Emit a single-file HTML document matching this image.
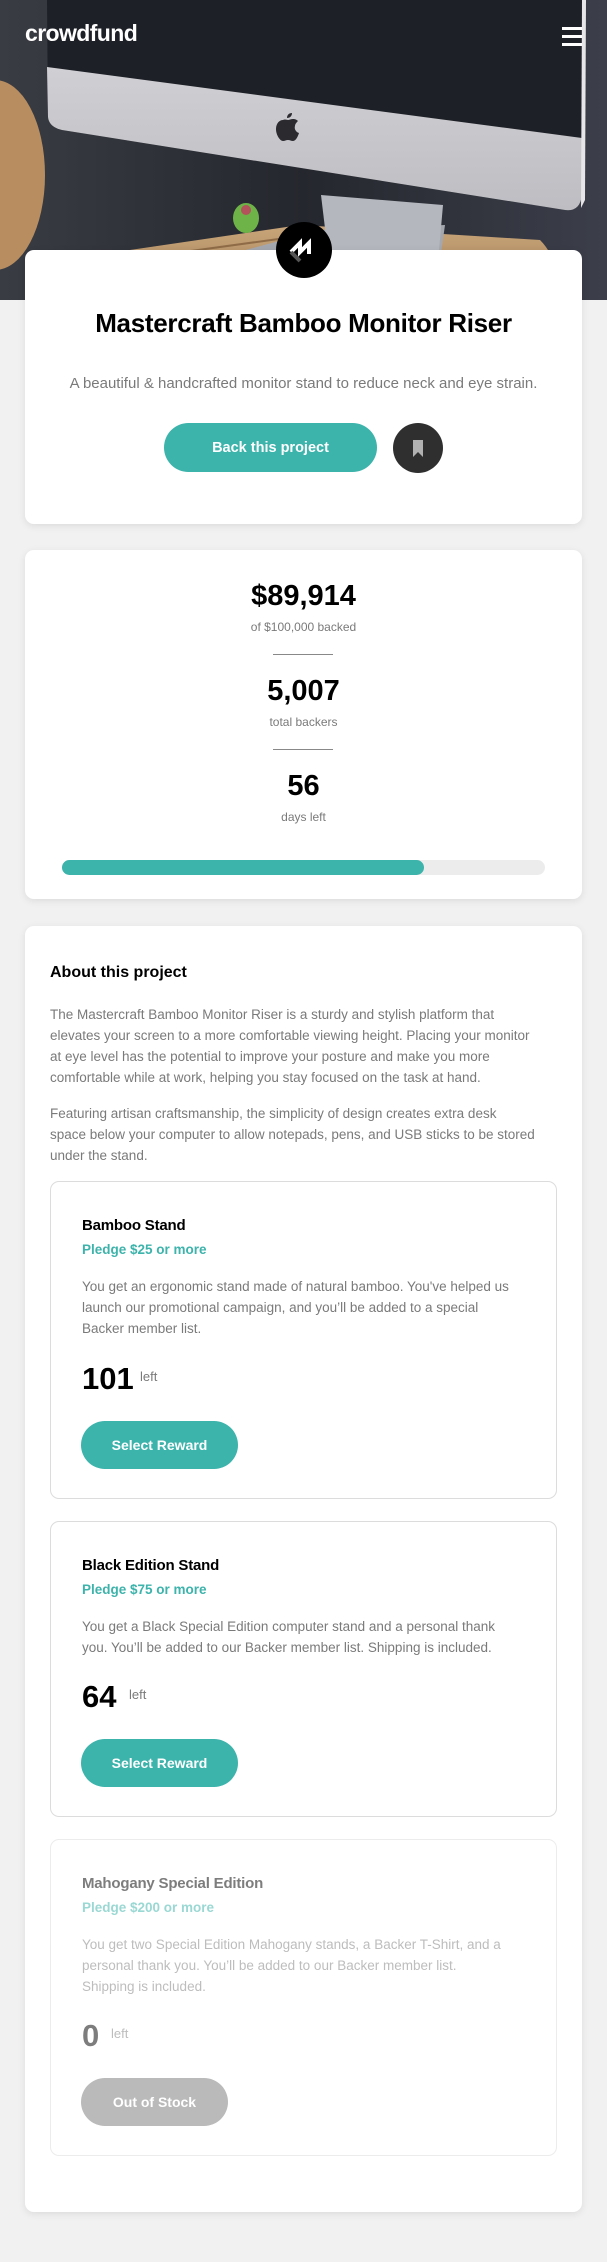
<!DOCTYPE html>
<html><head><meta charset="utf-8">
<style>
*{margin:0;padding:0;box-sizing:border-box}
body{width:607px;height:2262px;background:#f1f1f1;font-family:"Liberation Sans",sans-serif;position:relative;overflow:hidden}
.abs{position:absolute}
.card{position:absolute;left:25px;width:557px;background:#fff;border-radius:9px;box-shadow:0 2px 8px rgba(0,0,0,.09)}
.c{position:absolute;left:0;width:100%;text-align:center;white-space:nowrap}
.btn{position:absolute;background:#3cb3ab;color:#fff;border-radius:26px;font-weight:bold;font-size:14px;display:flex;align-items:center;justify-content:center}
.box{position:absolute;left:25px;width:507px;border:1px solid #dcdcdc;border-radius:9px}
.t{position:absolute;left:31px;white-space:nowrap}
.rt{font-weight:bold;font-size:15px;color:#000;letter-spacing:-.2px}
.pl{font-size:13.5px;color:#3cb3ab;font-weight:bold}
.ds{font-size:13.5px;color:#7a7a7a;line-height:21px}
.num{font-weight:bold;font-size:31px;color:#000}
.left{font-size:13px;color:#7a7a7a}
</style></head><body>
<!-- hero -->
<svg class="abs" style="left:0;top:0" width="607" height="300" viewBox="0 0 607 300">
<defs>
<linearGradient id="bg" x1="0" x2="1"><stop offset="0" stop-color="#3a3c44"/><stop offset=".5" stop-color="#25272e"/><stop offset="1" stop-color="#3c3f4a"/></linearGradient>
<linearGradient id="wood" x1="0" x2="0" y1="0" y2="1"><stop offset="0" stop-color="#c9a57a"/><stop offset="1" stop-color="#a37e55"/></linearGradient>
<linearGradient id="sil" x1="0" x2="0" y1="0" y2="1"><stop offset="0" stop-color="#d0d0d4"/><stop offset="1" stop-color="#bdbdc2"/></linearGradient>
</defs>
<rect width="607" height="300" fill="url(#bg)"/>
<ellipse cx="-5" cy="175" rx="50" ry="95" fill="#b88e60"/>
<path d="M60 300 Q75 260 130 250 L300 225 L540 240 Q560 260 560 300 Z" fill="url(#wood)"/>
<path d="M75 290 Q90 262 140 258 L300 236" stroke="#8f6c47" stroke-width="2" fill="none"/>
<path d="M190 265 L320 230 L445 225 L440 260 Q430 285 330 285 L200 278 Q185 272 190 265 Z" fill="#a4a7ae"/>
<path d="M321 195 L443 205 L438 262 L330 270 Z" fill="#b4b7be"/>
<path d="M47 0 L582 0 L582 195 Q580 212 565 210 L62 130 Q49 127 48 117 Z" fill="#1e2027"/>
<path d="M47 67 L582 138 L582 195 Q580 212 565 210 L62 130 Q49 127 48 117 Z" fill="url(#sil)"/>
<path d="M582 0 L586 0 L585 200 L581 208 Z" fill="#e6e6e8"/>
<path d="M283 120 c-4 0 -7 4 -7 9 c0 6 4 12 7 12 c2 0 3 -1 5 -1 c2 0 3 1 5 1 c3 0 5 -5 6 -8 c-3 -1 -5 -4 -4 -7 c0 -2 2 -4 3 -5 c-2 -2 -4 -2 -5 -2 c-2 0 -4 1 -5 1 c-1 0 -3 -1 -5 0 z M287 118 c0 -3 2 -5 5 -5 c0 3 -2 5 -5 5z" fill="#2b2b2f"/>
<ellipse cx="246" cy="218" rx="13" ry="15" fill="#6db347"/>
<circle cx="246" cy="210" r="5" fill="#b3525a"/>
</svg>
<div class="abs" style="left:25px;top:20px;color:#fff;font-weight:bold;font-size:23px;letter-spacing:-.6px">crowdfund</div>
<div class="abs" style="left:562px;top:27px;width:20px;height:3px;background:#fff;box-shadow:0 8px 0 #fff,0 16px 0 #fff"></div>

<!-- card 1 -->
<div class="card" style="top:250px;height:274px">
<div class="c" style="top:58px;font-weight:bold;font-size:26px;color:#000;letter-spacing:-.3px">Mastercraft Bamboo Monitor Riser</div>
<div class="c" style="top:125px;font-size:15px;color:#7a7a7a">A beautiful &amp; handcrafted monitor stand to reduce neck and eye strain.</div>
<div class="btn" style="left:139px;top:173px;width:213px;height:49px;border-radius:25px;font-size:14.5px">Back this project</div>
<div class="abs" style="left:368px;top:173px;width:50px;height:50px;border-radius:50%;background:#2f2f2f"></div>
<svg class="abs" style="left:386px;top:190px" width="14" height="17" viewBox="0 0 14 17"><path d="M2 0 H12 V17 L7 12 L2 17 Z" fill="#b1b1b1"/></svg>
</div>
<div class="abs" style="left:276px;top:222px;width:56px;height:56px;border-radius:50%;background:#000"></div>
<svg class="abs" style="left:276px;top:222px" width="56" height="56" viewBox="0 0 56 56">
<path d="M15 30 L24 21 L24 30 L33 21 L33 32" stroke="#fff" stroke-width="4" fill="none" stroke-linejoin="miter"/>
<path d="M15 30 L24 39" stroke="#555" stroke-width="4"/>
</svg>

<!-- card 2 -->
<div class="card" style="top:550px;height:349px">
<div class="c" style="top:30px;font-weight:bold;font-size:29px;color:#000">$89,914</div>
<div class="c" style="top:70px;font-size:12px;color:#7a7a7a">of $100,000 backed</div>
<div class="abs" style="left:248px;top:104px;width:60px;height:1px;background:#888"></div>
<div class="c" style="top:125px;font-weight:bold;font-size:29px;color:#000">5,007</div>
<div class="c" style="top:165px;font-size:12px;color:#7a7a7a">total backers</div>
<div class="abs" style="left:248px;top:199px;width:60px;height:1px;background:#888"></div>
<div class="c" style="top:220px;font-weight:bold;font-size:29px;color:#000">56</div>
<div class="c" style="top:260px;font-size:12px;color:#7a7a7a">days left</div>
<div class="abs" style="left:37px;top:310px;width:483px;height:15px;border-radius:8px;background:#ececec"></div>
<div class="abs" style="left:37px;top:310px;width:362px;height:15px;border-radius:8px;background:#3cb3ab"></div>
</div>

<!-- card 3 -->
<div class="card" style="top:926px;height:1286px">
<div class="abs" style="left:25px;top:38px;font-weight:bold;font-size:16px;color:#000">About this project</div>
<div class="abs" style="left:25px;top:78px;font-size:13.5px;color:#7a7a7a;line-height:21px;white-space:nowrap">The Mastercraft Bamboo Monitor Riser is a sturdy and stylish platform that<br>elevates your screen to a more comfortable viewing height. Placing your monitor<br>at eye level has the potential to improve your posture and make you more<br>comfortable while at work, helping you stay focused on the task at hand.</div>
<div class="abs" style="left:25px;top:177px;font-size:13.5px;color:#7a7a7a;line-height:21px;white-space:nowrap">Featuring artisan craftsmanship, the simplicity of design creates extra desk<br>space below your computer to allow notepads, pens, and USB sticks to be stored<br>under the stand.</div>

<div class="box" style="top:255px;height:318px">
<div class="t rt" style="top:35px">Bamboo Stand</div>
<div class="t pl" style="top:60px">Pledge $25 or more</div>
<div class="t ds" style="top:94px">You get an ergonomic stand made of natural bamboo. You've helped us<br>launch our promotional campaign, and you’ll be added to a special<br>Backer member list.</div>
<div class="t num" style="top:179px">101</div>
<div class="t left" style="left:89px;top:187px">left</div>
<div class="btn" style="left:30px;top:239px;width:157px;height:48px">Select Reward</div>
</div>

<div class="box" style="top:595px;height:296px">
<div class="t rt" style="top:35px">Black Edition Stand</div>
<div class="t pl" style="top:60px">Pledge $75 or more</div>
<div class="t ds" style="top:94px">You get a Black Special Edition computer stand and a personal thank<br>you. You’ll be added to our Backer member list. Shipping is included.</div>
<div class="t num" style="top:157px">64</div>
<div class="t left" style="left:78px;top:165px">left</div>
<div class="btn" style="left:30px;top:217px;width:157px;height:48px">Select Reward</div>
</div>

<div class="box" style="top:913px;height:317px;border-color:#ececec">
<div class="t rt" style="top:35px;color:#7d7d7d">Mahogany Special Edition</div>
<div class="t pl" style="top:60px;color:#9ad8d3">Pledge $200 or more</div>
<div class="t ds" style="top:94px;color:#bdbdbd">You get two Special Edition Mahogany stands, a Backer T-Shirt, and a<br>personal thank you. You’ll be added to our Backer member list.<br>Shipping is included.</div>
<div class="t num" style="top:178px;color:#7d7d7d">0</div>
<div class="t left" style="left:60px;top:186px;color:#bdbdbd">left</div>
<div class="btn" style="left:30px;top:238px;width:147px;height:48px;background:#bababa">Out of Stock</div>
</div>
</div>
</body></html>
